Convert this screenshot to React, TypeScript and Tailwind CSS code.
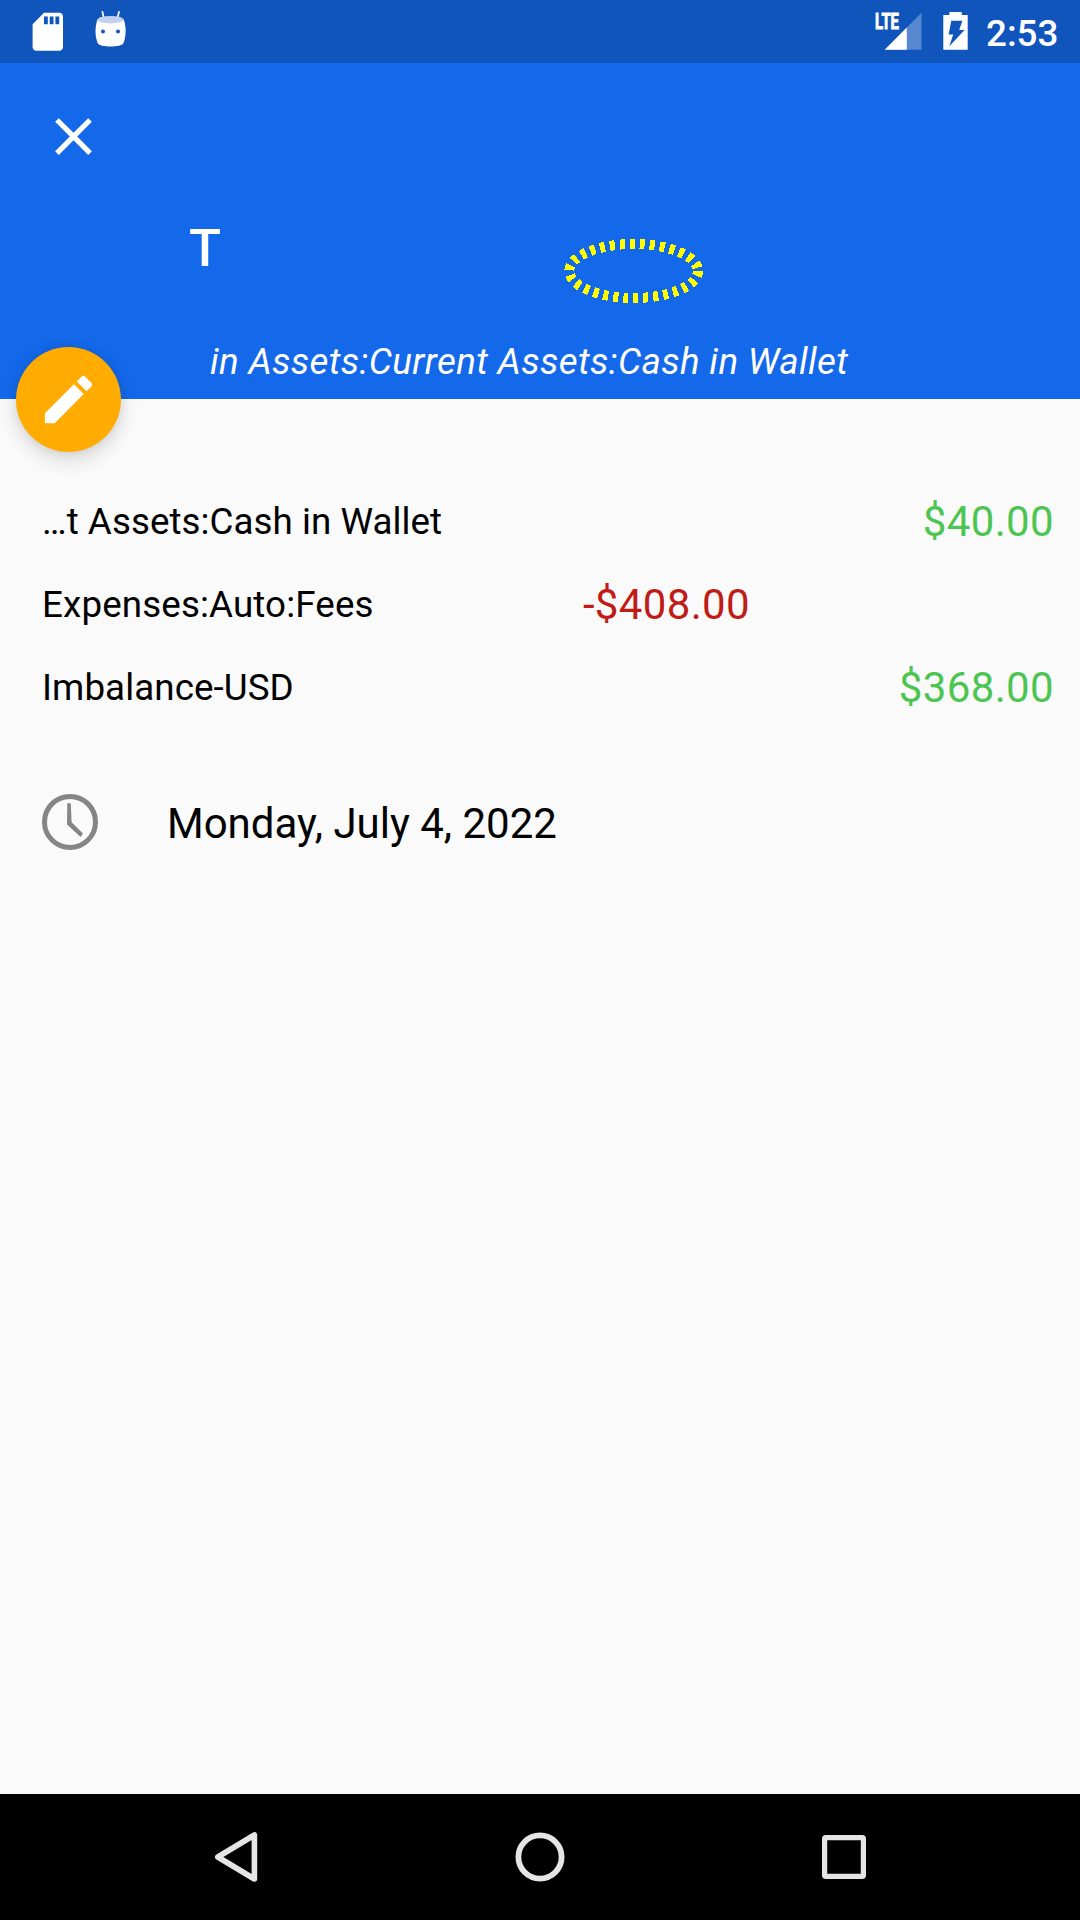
import React from "react";

const splits = [
  { account: "…t Assets:Cash in Wallet", debit: "", credit: "$40.00", tracking: "tracking-[0.05px]" },
  { account: "Expenses:Auto:Fees", debit: "-$408.00", credit: "", tracking: "tracking-[0.13px]" },
  { account: "Imbalance-USD", debit: "", credit: "$368.00", tracking: "tracking-[0.08px]" },
];

function SdCardIcon() {
  return (
    <svg className="ml-[24.7px] size-[45.6px] shrink-0" viewBox="0 0 24 24" fill="#fff">
      <path d="M18 2h-8L4.02 8 4 20c0 1.1.9 2 2 2h12c1.1 0 2-.9 2-2V4c0-1.1-.9-2-2-2zm-6 6h-2V4h2v4zm3 0h-2V4h2v4zm3 0h-2V4h2v4z" />
    </svg>
  );
}

function DroidIcon() {
  return (
    <svg className="ml-[19.7px] h-[63px] w-10 shrink-0" viewBox="90 0 40 63">
      <path d="M102.4 11.8l1.6 7M119 11.8l-1.6 7" stroke="#fff" strokeWidth="1.7" strokeLinecap="round" />
      <path d="M97.5 19.5C95 26 94.6 36 97.8 43.2C99.5 47.6 121.7 47.6 123.4 43.2C126.6 36 126.2 26 123.7 19.5Z" fill="#fff" />
      <ellipse cx="110.5" cy="19.7" rx="13" ry="3.7" fill="#c1d1ed" />
      <circle cx="103" cy="31.5" r="2" fill="#1055bc" />
      <circle cx="118" cy="31.5" r="2" fill="#1055bc" />
    </svg>
  );
}

function SignalIcon() {
  return (
    <svg className="h-[63px] w-[50px] shrink-0" viewBox="874 0 50 63">
      <path d="M884.7 49.8L921.5 12.8V49.8Z" fill="#fff" fillOpacity="0.3" />
      <path d="M884.7 49.8L906.8 27.6V49.8Z" fill="#fff" />
      <text
        transform="translate(875 29.2) scale(0.69 1)"
        fontFamily="Roboto"
        fontWeight="700"
        fontSize="21.5"
        fill="#fff"
        stroke="#fff"
        strokeWidth="0.9"
      >
        LTE
      </text>
    </svg>
  );
}

function BatteryIcon() {
  return (
    <svg className="ml-[19px] h-[63px] w-[25px] shrink-0" viewBox="943 0 25 63">
      <path
        fillRule="evenodd"
        fill="#fff"
        d="M949.4 12H961.8V15H967.7V49.8H943.3V15H949.4ZM951.3 20.8H962.4L959.2 30H964.6L949.3 46.2L953.2 34.6H948.6Z"
      />
    </svg>
  );
}

export default function App() {
  return (
    <div className="flex h-[1920px] w-[1080px] flex-col overflow-hidden bg-[#fafafa] font-['Roboto',sans-serif] text-black">
      <div className="flex h-[63px] shrink-0 items-center bg-[#1055bc]">
        <SdCardIcon />
        <DroidIcon />
        <div className="flex-1" />
        <SignalIcon />
        <BatteryIcon />
        <span className="mt-[4px] ml-[18px] w-[94px] text-[36.75px] leading-[43px] font-medium text-white">2:53</span>
      </div>

      <header className="relative h-[336px] shrink-0 bg-[#1469eb] text-white">
        <div className="pt-[42px] pl-[42px]">
          <svg className="size-[63px]" viewBox="0 0 24 24" fill="#fff">
            <path d="M19 6.41L17.59 5 12 10.59 6.41 5 5 6.41 10.59 12 5 17.59 6.41 19 12 13.41 17.59 19 19 17.59 13.41 12z" />
          </svg>
        </div>
        <div className="mt-[49px] pl-[189px] text-[52.5px] leading-[62px] font-medium">T</div>
        <div className="mt-[61px] pl-[210px] text-[36.75px] leading-[43px] tracking-[0.36px] whitespace-nowrap italic">
          in Assets:Current Assets:Cash in Wallet
        </div>
        <svg className="absolute top-[172px] left-[560px] h-[72px] w-[148px]" viewBox="560 235 148 72" shapeRendering="crispEdges">
          <ellipse cx="633.6" cy="271" rx="64.3" ry="27" fill="none" stroke="#ff0" strokeWidth="10" strokeDasharray="5 5" />
        </svg>
        <button className="absolute top-[284px] left-4 flex size-[105px] items-center justify-center rounded-full bg-[#ffab00] shadow-[0_8px_20px_rgba(0,0,0,0.14),0_0_10px_rgba(0,0,0,0.08)]">
          <svg className="size-[63px]" viewBox="0 0 24 24" fill="#fff">
            <path d="M3 17.25V21h3.75L17.81 9.94l-3.75-3.75L3 17.25zM20.71 7.04c.39-.39.39-1.02 0-1.41l-2.34-2.34c-.39-.39-1.02-.39-1.41 0l-1.83 1.83 3.75 3.75 1.83-1.83z" />
          </svg>
        </button>
      </header>

      <main className="flex flex-1 flex-col pt-[81px]">
        {splits.map((s) => (
          <div key={s.account} className="flex h-[83px] items-center pr-[26px] pl-[42px]">
            <span className={`flex-1 text-[36.75px] leading-[43px] whitespace-nowrap ${s.tracking}`}>{s.account}</span>
            <span className="text-right text-[42px] leading-[49px] tracking-[0.35px] text-[#c11b17]">{s.debit}</span>
            <span className="w-[304px] text-right text-[42px] leading-[49px] tracking-[0.35px] text-[#4cc552]">{s.credit}</span>
          </div>
        ))}
        <div className="mt-[62px] flex items-center pl-[39px]">
          <svg className="size-[62px]" viewBox="39 791 62 62" fill="none">
            <circle cx="70" cy="821.9" r="25.5" stroke="#858585" strokeWidth="5" />
            <path d="M67.3 803.2H70.8L71.6 822.3L83 833.5L80.6 837L67 824.5Z" fill="#858585" />
          </svg>
          <span className="mt-[2px] ml-[66px] text-[42px] leading-[49px]">Monday, July 4, 2022</span>
        </div>
      </main>

      <nav className="flex h-[126px] shrink-0 items-center bg-black">
        <svg className="ml-[205px] h-[126px] w-[62px]" viewBox="205 1794 62 126" fill="none">
          <path d="M254.4 1835V1879L217.8 1857Z" stroke="#e5e5e5" strokeWidth="5.6" strokeLinejoin="round" />
        </svg>
        <svg className="ml-[242px] h-[126px] w-[62px]" viewBox="509 1794 62 126" fill="none">
          <circle cx="540" cy="1857" r="21.6" stroke="#e5e5e5" strokeWidth="5.8" />
        </svg>
        <svg className="ml-[242px] h-[126px] w-[62px]" viewBox="813 1794 62 126" fill="none">
          <rect x="824.6" y="1837.6" width="38.8" height="38.8" rx="1.2" stroke="#e5e5e5" strokeWidth="5.2" />
        </svg>
      </nav>
    </div>
  );
}
